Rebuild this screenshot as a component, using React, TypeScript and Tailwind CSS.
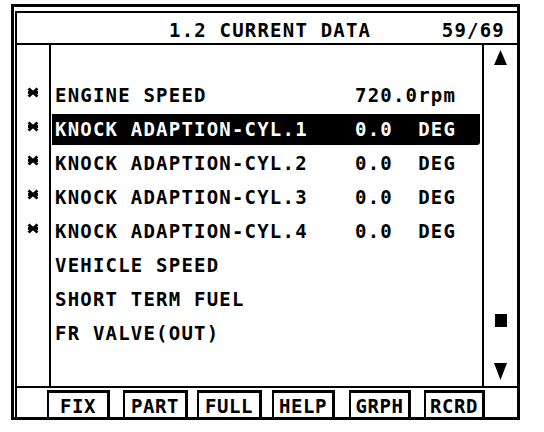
import React from "react";

const font = { fontFamily: '"DejaVu Sans Mono", "Liberation Mono", monospace' };

function Star() {
  return (
    <svg width="12" height="11" viewBox="0 0 12 11" className="block">
      <path d="M1.5 1.5 L10.5 9.5 M10.5 1.5 L1.5 9.5 M1 5.5 L11 5.5" stroke="black" strokeWidth="2.8" fill="none" />
    </svg>
  );
}

type Row = { label: string; value?: string; star: boolean; selected?: boolean };

const rows: Row[] = [
  { label: "ENGINE SPEED", value: "720.0rpm", star: true },
  { label: "KNOCK ADAPTION-CYL.1", value: "0.0  DEG", star: true, selected: true },
  { label: "KNOCK ADAPTION-CYL.2", value: "0.0  DEG", star: true },
  { label: "KNOCK ADAPTION-CYL.3", value: "0.0  DEG", star: true },
  { label: "KNOCK ADAPTION-CYL.4", value: "0.0  DEG", star: true },
  { label: "VEHICLE SPEED", star: false },
  { label: "SHORT TERM FUEL", star: false },
  { label: "FR VALVE(OUT)", star: false },
];

const buttons = [
  { label: "FIX", cls: "ml-[30px] w-[63px]" },
  { label: "PART", cls: "ml-[13px] w-[65px]" },
  { label: "FULL", cls: "ml-[9px] w-[65px]" },
  { label: "HELP", cls: "ml-[10px] w-[63px]" },
  { label: "GRPH", cls: "ml-[14px] w-[62px]" },
  { label: "RCRD", cls: "ml-[13px] w-[61px]" },
];

export default function App() {
  return (
    <div className="w-[544px] h-[432px] bg-white text-black overflow-hidden" style={font}>
      <div className="ml-[11px] mt-[4px] w-[509px] h-[416px] border-[3px] border-black pt-[4px] pl-[1px] flex flex-col">
        <div className="flex-1 flex flex-col border-t-2 border-l-2 border-black">
          {/* header */}
          <div className="h-[32px] border-b-2 border-black flex items-center pt-[5px] pl-[152px] pr-[12px] text-[19px] font-bold tracking-[1.2px] leading-none whitespace-pre">
            <span>1.2 CURRENT DATA</span>
            <span className="ml-auto">59/69</span>
          </div>
          {/* main */}
          <div className="h-[343px] border-b-2 border-black flex">
            <div className="w-[34px] border-r-2 border-black pt-[33px] flex flex-col">
              {rows.map((r, i) => (
                <div key={i} className="h-[34px] flex items-start pl-[10px] pt-[9px]">
                  {r.star ? <Star /> : null}
                </div>
              ))}
            </div>
            <div className="w-[431px] pt-[33px] flex flex-col text-[19px] font-bold tracking-[1.2px] leading-none whitespace-pre">
              {rows.map((r, i) => (
                <div key={i} className="h-[34px] flex items-center">
                  <div
                    className={
                      r.selected
                        ? "ml-[1px] mr-[2px] flex-1 h-[31px] bg-black text-white grid grid-cols-[300px_1fr] items-center pl-[3px] rounded-br-[3px]"
                        : "flex-1 h-[31px] grid grid-cols-[300px_1fr] items-center pl-[4px]"
                    }
                  >
                    <span className="pt-[1px]">{r.label}</span>
                    <span className="pt-[1px]">{r.value ?? ""}</span>
                  </div>
                </div>
              ))}
            </div>
            <div className="flex-1 border-l-2 border-black flex flex-col items-center pt-[5px] pb-[6px]">
              <svg width="13" height="15" viewBox="0 0 13 15" className="block">
                <polygon points="6.5,0 13,15 0,15" fill="black" />
              </svg>
              <div className="flex-1" />
              <div className="w-[12px] h-[13px] bg-black" />
              <div className="h-[36px]" />
              <svg width="13" height="17" viewBox="0 0 13 17" className="block">
                <polygon points="0,0 13,0 6.5,17" fill="black" />
              </svg>
            </div>
          </div>
          {/* bottom buttons */}
          <div className="flex-1 flex items-stretch pt-[2px] text-[19px] font-bold tracking-[0.5px] leading-none">
            {buttons.map((b) => (
              <div
                key={b.label}
                className={`${b.cls} border-t-[3px] border-l-2 border-r-[3px] border-black flex items-center justify-center pt-[2px]`}
              >
                {b.label}
              </div>
            ))}
          </div>
        </div>
      </div>
    </div>
  );
}
